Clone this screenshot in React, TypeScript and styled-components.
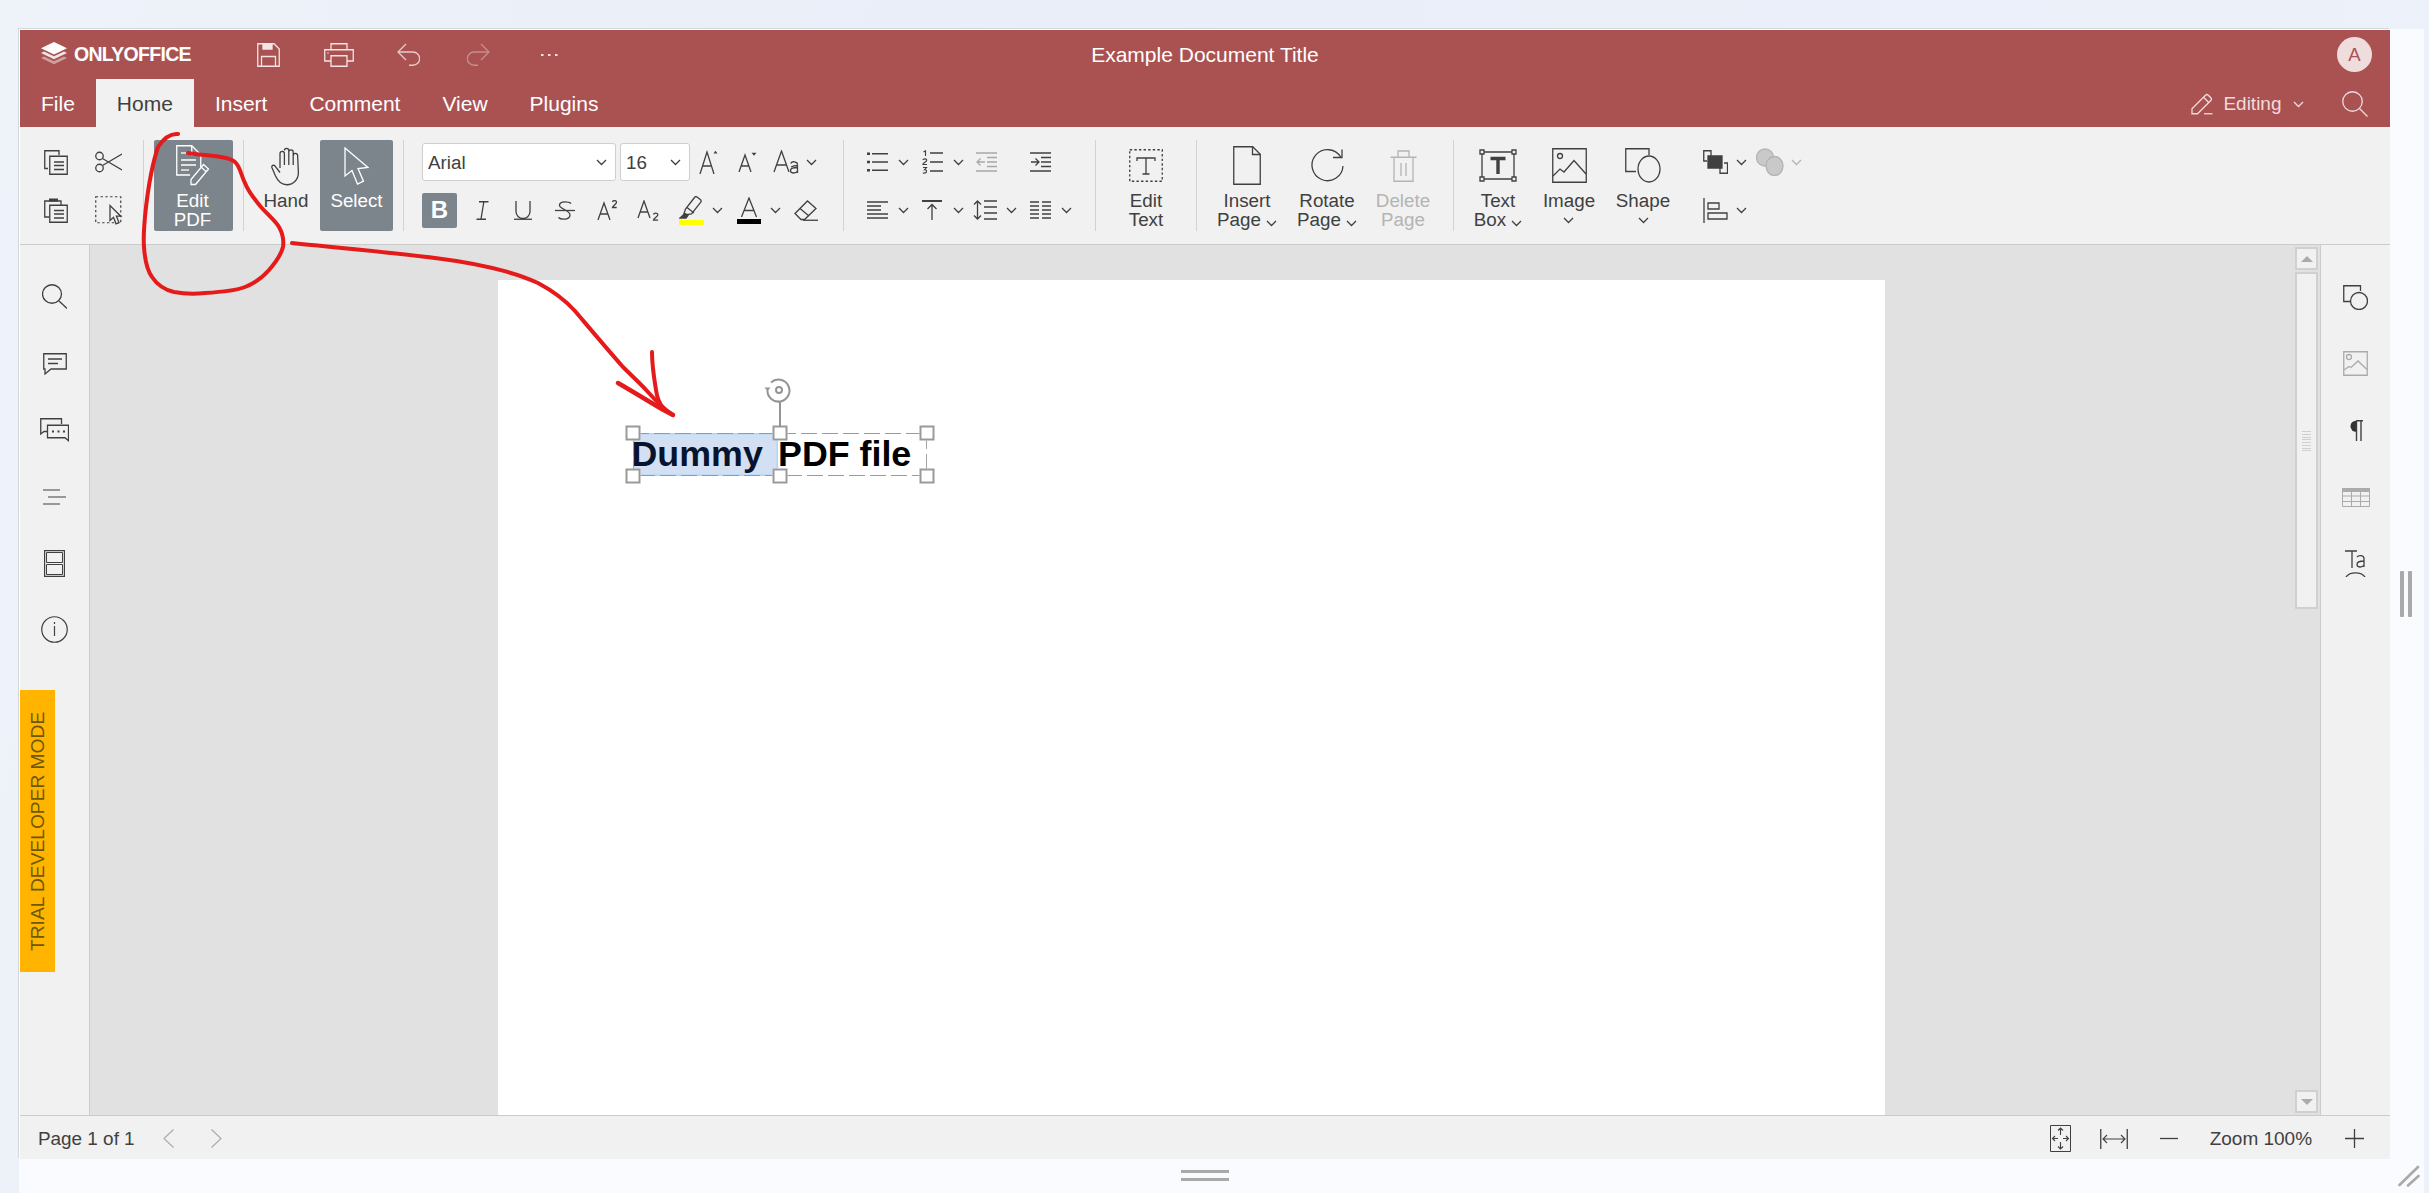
import React from "react";
import styled, { createGlobalStyle } from "styled-components";

const Global = createGlobalStyle`
  html, body { margin: 0; padding: 0; height: 100%; overflow: hidden; }
  body { font-family: "Liberation Sans", Arial, sans-serif; color: #404040; }
  #root { height: 100%; }
`;

const Shell = styled.div`
  position: relative;
  height: 100vh;
  box-sizing: border-box;
  padding: 29px 5px 0 19px;
  background: linear-gradient(100deg, #eef2f9 0%, #e9eef8 40%, #edf1fa 100%);
`;
const Host = styled.div`
  height: 100%;
  display: grid;
  grid-template-columns: 2371px 34px;
  grid-template-rows: 1130px 1fr;
  background: #fafbff;
`;
const Editor = styled.div`
  display: flex;
  flex-direction: column;
  border-top: 1px solid #fff;
  border-left: 1px solid #fff;
  box-shadow: -1px -1px 0 #d4d7dd;
  min-height: 0;
`;
const HeaderTop = styled.div`
  height: 49px;
  flex: none;
  background: #aa5252;
  display: grid;
  grid-template-columns: 1fr auto 1fr;
  align-items: center;
  color: #fff;
`;
const HeaderLeft = styled.div`
  display: flex;
  align-items: center;
  padding-left: 21px;
`;
const LogoBlock = styled.div`
  width: 192.5px;
  display: flex;
  align-items: center;
  gap: 7px;
`;
const LogoMark = styled.svg`
  display: block;
  flex: none;
`;
const LogoText = styled.span`
  font-weight: 700;
  font-size: 19.5px;
  letter-spacing: -0.7px;
  color: #fff;
`;
const Quick = styled.div<{ $opacity?: number }>`
  width: 70px;
  display: flex;
  justify-content: center;
  align-items: center;
  color: #fff;
  opacity: ${(p) => p.$opacity ?? 0.85};
`;
const Title = styled.div`
  font-size: 21px;
  color: #fff;
  padding-top: 1px;
`;
const HeaderRight = styled.div`
  display: flex;
  justify-content: flex-end;
  padding-right: 18px;
`;
const Avatar = styled.div`
  width: 35px;
  height: 35px;
  border-radius: 50%;
  background: #efdcdc;
  color: #aa5252;
  font-size: 18.6px;
  display: flex;
  align-items: center;
  justify-content: center;
`;
const TabRow = styled.div`
  height: 48px;
  flex: none;
  background: #aa5252;
  display: flex;
`;
const Tab = styled.div<{ $on?: boolean }>`
  padding: 2px 21px 0;
  display: flex;
  align-items: center;
  font-size: 21px;
  color: ${(p) => (p.$on ? "#404040" : "#fff")};
  background: ${(p) => (p.$on ? "#f1f1f1" : "transparent")};
`;
const TabRight = styled.div`
  margin-left: auto;
  display: flex;
  align-items: center;
  padding: 2px 22px 0 0;
  color: #efdcdc;
`;
const EditingText = styled.span`
  font-size: 19px;
  margin: 0 11px 0 10px;
`;
const RightSearch = styled.span`
  margin-left: 38.5px;
  display: flex;
`;

const Toolbar = styled.div`
  height: 118px;
  flex: none;
  box-sizing: border-box;
  background: #f1f1f1;
  border-bottom: 1.5px solid #cbcbcb;
  display: flex;
  align-items: flex-start;
  padding-top: 13px;
`;
const Sep = styled.div`
  width: 1px;
  height: 91px;
  flex: none;
  background: #d2d2d2;
`;
const Section = styled.div<{ $w?: number; $pl?: number }>`
  width: ${(p) => (p.$w ? `${p.$w}px` : "auto")};
  flex: none;
  box-sizing: border-box;
  padding-left: ${(p) => p.$pl ?? 0}px;
  display: flex;
`;
const Stack = styled.div<{ $w?: number; $pl?: number }>`
  width: ${(p) => (p.$w ? `${p.$w}px` : "auto")};
  flex: none;
  box-sizing: border-box;
  padding-left: ${(p) => p.$pl ?? 0}px;
  display: flex;
  flex-direction: column;
`;
const Row1 = styled.div<{ $gap?: number }>`
  height: 44px;
  display: flex;
  align-items: center;
  gap: ${(p) => p.$gap ?? 0}px;
`;
const Row2 = styled.div<{ $gap?: number }>`
  height: 52px;
  display: flex;
  align-items: center;
  gap: ${(p) => p.$gap ?? 0}px;
`;
const Tool = styled.div<{ $w?: number; $ml?: number; $off?: boolean }>`
  width: ${(p) => p.$w ?? 35}px;
  margin-left: ${(p) => p.$ml ?? 0}px;
  flex: none;
  display: flex;
  justify-content: center;
  align-items: center;
  color: ${(p) => (p.$off ? "#a8a8a8" : "#404040")};
`;
const Split = styled.div<{ $ml?: number; $off?: boolean }>`
  width: 52px;
  margin-left: ${(p) => p.$ml ?? 0}px;
  flex: none;
  display: grid;
  grid-template-columns: 34px 18px;
  align-items: center;
  justify-items: center;
  color: ${(p) => (p.$off ? "#b4b4b4" : "#404040")};
`;
const Big = styled.div<{ $w: number; $ml?: number; $mr?: number; $on?: boolean; $off?: boolean; $pl?: number; $pr?: number }>`
  width: ${(p) => p.$w}px;
  height: 91px;
  flex: none;
  box-sizing: border-box;
  padding-left: ${(p) => p.$pl ?? 0}px;
  padding-right: ${(p) => p.$pr ?? 0}px;
  margin-left: ${(p) => p.$ml ?? 0}px;
  margin-right: ${(p) => p.$mr ?? 0}px;
  border-radius: 2px;
  display: flex;
  flex-direction: column;
  align-items: center;
  background: ${(p) => (p.$on ? "#7d858c" : "transparent")};
  color: ${(p) => (p.$on ? "#fff" : p.$off ? "#b4b4b4" : "#404040")};
`;
const BigIcon = styled.div`
  height: 51px;
  flex: none;
  display: flex;
  align-items: center;
  justify-content: center;
`;
const Label = styled.div`
  font-size: 18.8px;
  line-height: 18.7px;
  padding-top: 1px;
  text-align: center;
  white-space: nowrap;
`;
const Combo = styled.div<{ $w: number; $ml?: number }>`
  width: ${(p) => p.$w}px;
  height: 38px;
  flex: none;
  box-sizing: border-box;
  margin-left: ${(p) => p.$ml ?? 0}px;
  background: #fff;
  border: 1.5px solid #cfcfcf;
  border-radius: 3px;
  padding: 1px 8px 0 5px;
  display: flex;
  align-items: center;
  justify-content: space-between;
  font-size: 18.8px;
  color: #404040;
`;
const Pressed = styled.div`
  width: 35px;
  height: 35px;
  border-radius: 2px;
  background: #7d858c;
  color: #fff;
  font-weight: 700;
  font-size: 24px;
  display: flex;
  align-items: center;
  justify-content: center;
`;

const Main = styled.div`
  flex: 1;
  min-height: 0;
  display: flex;
`;
const LeftRail = styled.div`
  width: 70px;
  flex: none;
  box-sizing: border-box;
  background: #f1f1f1;
  border-right: 1.5px solid #cbcbcb;
  padding-top: 18.7px;
  display: flex;
  flex-direction: column;
`;
const RailSlot = styled.div<{ $off?: boolean }>`
  height: 66.6px;
  flex: none;
  display: flex;
  align-items: center;
  justify-content: center;
  color: ${(p) => (p.$off ? "#ababab" : "#404040")};
`;
const Trial = styled.div`
  margin-top: 27px;
  width: 35px;
  height: 282px;
  background: #ffb400;
  color: #705800;
  font-size: 19.2px;
  writing-mode: vertical-rl;
  transform: rotate(180deg);
  display: flex;
  align-items: center;
  justify-content: center;
  white-space: nowrap;
`;
const Canvas = styled.div`
  flex: 1;
  min-width: 0;
  background: #e1e1e1;
  display: flex;
  overflow: hidden;
`;
const Viewport = styled.div`
  flex: 1;
  min-width: 0;
  padding: 35px 0 0 408px;
  display: flex;
  align-items: stretch;
`;
const Sheet = styled.div`
  position: relative;
  width: 1387px;
  background: #fff;
`;
const TextObject = styled.div`
  position: absolute;
  left: 135px;
  top: 153px;
  width: 294px;
  height: 43px;
  line-height: 43px;
  font-size: 35.8px;
  font-weight: 700;
  color: #000;
  white-space: nowrap;
`;
const Selected = styled.span`
  display: inline-block;
  width: 145px;
  height: 43px;
  vertical-align: top;
  text-indent: -1.5px;
  background: #d3e0f4;
  box-shadow: inset 0 0 0 1.5px #a9d8fb;
  color: #06142e;
`;
const Dash = styled.svg`
  position: absolute;
  left: 0;
  top: 0;
  fill: none;
  stroke: #9a9a9a;
  stroke-width: 1.8;
  stroke-dasharray: 16 5;
`;
const Handle = styled.div<{ $x: number; $y: number }>`
  position: absolute;
  left: ${(p) => p.$x}px;
  top: ${(p) => p.$y}px;
  width: 15px;
  height: 15px;
  box-sizing: border-box;
  background: #fff;
  border: 2.5px solid #9a9a9a;
  transform: translate(-50%, -50%);
`;
const Rotator = styled.svg`
  position: absolute;
  left: 130px;
  top: -56px;
  fill: none;
  stroke: #949494;
  stroke-width: 2;
`;
const Scroll = styled.div`
  width: 23px;
  flex: none;
  margin-right: 2px;
  padding: 2px 0;
  display: flex;
  flex-direction: column;
  gap: 2px;
`;
const ScrollArrow = styled.div<{ $down?: boolean }>`
  height: 23px;
  flex: none;
  box-sizing: border-box;
  background: #f1f1f1;
  border: 2px solid #d0d0d0;
  margin-top: ${(p) => (p.$down ? "auto" : "0")};
  display: flex;
  align-items: center;
  justify-content: center;
  &::before {
    content: "";
    border-left: 6px solid transparent;
    border-right: 6px solid transparent;
    ${(p) => (p.$down ? "border-top" : "border-bottom")}: 6px solid #ababab;
  }
`;
const ScrollThumb = styled.div`
  height: 337px;
  flex: none;
  box-sizing: border-box;
  background: #f1f1f1;
  border: 2px solid #d0d0d0;
  display: flex;
  align-items: center;
  justify-content: center;
  &::before {
    content: "";
    width: 9px;
    height: 20px;
    background: repeating-linear-gradient(#cfcfcf 0 1px, transparent 1px 2.75px);
  }
`;
const RightRail = styled.div`
  width: 70px;
  flex: none;
  box-sizing: border-box;
  background: #f1f1f1;
  border-left: 1.5px solid #cbcbcb;
  padding-top: 19px;
  display: flex;
  flex-direction: column;
`;
const Status = styled.div`
  height: 44px;
  flex: none;
  box-sizing: border-box;
  background: #f1f1f1;
  border-top: 1.5px solid #cbcbcb;
  display: flex;
  align-items: center;
  padding: 2px 0 0 18px;
  font-size: 18.9px;
  color: #404040;
`;
const StatusNav = styled.div<{ $ml: number; $off?: boolean }>`
  margin-left: ${(p) => p.$ml}px;
  flex: none;
  display: flex;
  color: ${(p) => (p.$off ? "#a9a9a9" : "#404040")};
`;
const ZoomText = styled.span`
  margin-left: 32px;
  font-size: 19px;
`;
const Gutter = styled.div`
  display: flex;
  align-items: center;
  justify-content: center;
  gap: 3.5px;
  padding-right: 2px;
  & > i {
    width: 4px;
    height: 46px;
    background: #a9a9a9;
    border-radius: 1px;
  }
`;
const FooterBar = styled.div`
  display: flex;
  align-items: flex-start;
  justify-content: center;
  padding-top: 11px;
`;
const DragLines = styled.div`
  width: 48px;
  height: 11px;
  border-top: 3px solid #a9a9a9;
  border-bottom: 3px solid #a9a9a9;
  box-sizing: border-box;
`;
const Corner = styled.div`
  padding: 6px 0 0 8px;
  display: flex;
  align-items: flex-start;
`;
const Glyph = styled.svg`
  display: block;
  fill: none;
  stroke: currentColor;
  stroke-width: 1.3;
  flex: none;
`;
const Overlay = styled.svg`
  position: absolute;
  left: 0;
  top: 0;
  pointer-events: none;
  fill: none;
  stroke: #e51b1b;
  stroke-linecap: round;
  stroke-linejoin: round;
`;

const I: React.FC<{ w: number; h: number; sw?: number; children: React.ReactNode }> = ({ w, h, sw, children }) => (
  <Glyph width={w} height={h} viewBox={`0 0 ${w} ${h}`} strokeWidth={sw}>{children}</Glyph>
);
const Chev = ({ color }: { color?: string }) => (
  <Glyph width="11" height="7" viewBox="0 0 11 7" strokeWidth={1.2} stroke={color}><path d="M1 1l4.5 4.5L10 1" /></Glyph>
);
const InlineChev = styled.span`
  display: inline-block;
  margin-left: 5px;
  vertical-align: -1px;
  & > svg { display: inline-block; }
`;
const LabelChev = () => <InlineChev><Chev /></InlineChev>;
const ChevLine = styled.div`
  height: 18.7px;
  display: flex;
  align-items: center;
  justify-content: center;
`;

const Lines = ({ x1, x2, ys }: { x1: number; x2: number; ys: number[] }) => (
  <path d={ys.map((y) => `M${x1} ${y}H${x2}`).join("")} />
);

const icons = {
  logo: (
    <LogoMark width="26" height="25" viewBox="0 0 26 25">
      <path d="M13 0l13 6.2L13 12.4 0 6.2z" fill="#fff" />
      <path d="M3 9.6L0 11l13 6.2L26 11l-3-1.4-10 4.7z" fill="#fff" opacity=".85" />
      <path d="M3 14.6L0 16l13 6.2L26 16l-3-1.4-10 4.7z" fill="#fff" opacity=".45" />
    </LogoMark>
  ),
  save: <I w={23} h={24}><path d="M.75.75H17L22.25 6V23.25H.75z" /><path d="M4.5 23V13.5h14V23" /><path d="M6 .75V6h9V.75" fill="currentColor" /></I>,
  print: <I w={30} h={24}><path d="M7 6.5V.75h16V6.5" /><path d="M7 18H.75V6.75h28.5V18H23" /><path d="M7 12.75h16v10.5H7z" /><path d="M3.5 10h1" /></I>,
  undo: <I w={23} h={23}><path d="M9 1L1 9l8 8" /><path d="M1 9h15a6 6 0 0 1 0 13.25h-4" /></I>,
  redo: <I w={23} h={23}><path d="M14 1l8 8-8 8" /><path d="M22 9H7a6 6 0 0 0 0 13.25h4" /></I>,
  more: <I w={18} h={4}><path d="M1 2h2.5M8 2h2.5M15 2h2.5" strokeWidth={2} /></I>,
  pencil: <I w={22} h={22}><path d="M1 20.75v-5L14.5 2.2a2 2 0 0 1 2.8 0l2.5 2.5a2 2 0 0 1 0 2.8L6.5 20.75z" /><path d="M12.5 4.2l5.3 5.3" /><path d="M13 20.75h8.5" /></I>,
  search: <I w={26} h={26}><circle cx="10.5" cy="10.5" r="9.75" /><path d="M17.5 17.5l8 8" /></I>,
  copy: <I w={24} h={25}><path d="M4 18.5H.75V.75H15V5" /><path d="M5.75 6.25h17.5v18H5.75z" /><Lines x1={10} x2={20} ys={[12, 15.5, 19.5]} /></I>,
  cut: <I w={27} h={22}><circle cx="4.5" cy="5" r="3.75" /><circle cx="4.5" cy="17" r="3.75" /><path d="M7.5 7.5L27 19M7.5 14.5L27 3" /></I>,
  paste: <I w={24} h={25}><path d="M5 19H.75V3H17v4" /><path d="M5 2h9" strokeWidth={3} /><path d="M5.75 7.25h17.5v17H5.75z" /><Lines x1={10} x2={20} ys={[12.5, 16, 20]} /></I>,
  selectAll: <I w={28} h={29}><path d="M.75.75h25v26h-25z" strokeDasharray="2.4 2.4" strokeWidth={1.2} /><path d="M15 9.5v15l3.5-3.2 2.5 6.5 3-1.2-2.6-6.4h4.4z" fill="#f1f1f1" /></I>,
  editPdf: <I w={34} h={41}><path d="M14 30H.75V.75h15l9 9V22" /><path d="M15.75 1v9h9" /><Lines x1={5} x2={15} ys={[8]} /><Lines x1={5} x2={20} ys={[15, 20]} /><Lines x1={5} x2={13} ys={[25]} /><path d="M15 39.5v-5l12.5-15 5 4.5-13 15.5z" /><path d="M25 22l5 4.5" /></I>,
  hand: <I w={30} h={40}><path d="M9 22V7.5a2.2 2.2 0 0 1 4.4 0V19m0-14.5a2.2 2.2 0 0 1 4.4 0V19m0-13a2.2 2.2 0 0 1 4.4 0v13m0-9.5a2.2 2.2 0 0 1 4.4 0l.8 17c0 7-5 12.25-11.5 12.25-6 0-9-3.5-11.5-9L.9 21.5c-.6-2 2-3 3.2-1.4L9 26.5" /></I>,
  cursor: <I w={25} h={38}><path d="M1 1v28l7-5.5L13.5 37l6-2.8-5.5-12.7 10-1z" /></I>,
  arrowUpA: <I w={19} h={24}><path d="M1 24L8 2l7 22M3.6 16h9" /><path d="M14.5 3.5l2-2.8 2 2.8z" fill="currentColor" stroke="none" /></I>,
  arrowDownA: <I w={19} h={20}><path d="M1 20L7 3l6 17M3 14h8" /><path d="M13.5.8h5l-2.5 3z" fill="currentColor" stroke="none" /></I>,
  aa: <I w={26} h={24}><path d="M1 22L8.5 1 16 22M3.6 15h10" /><path d="M24.5 14.5c0-3-5.5-3.8-6.8-1M18 17c3-1.6 6.5-1.5 6.5-1.5V23m0-2c-1.2 2.5-7 3-7-.5 0-2 3-3 7-3" /></I>,
  italic: <I w={13} h={19}><path d="M3 .75h9.5M.5 18.25H10M7.8 1L5 18" /></I>,
  underline: <I w={18} h={20}><path d="M2 1v10.5a7 7 0 0 0 14 0V1" /><path d="M0 19.25h18" /></I>,
  strike: <I w={20} h={19}><path d="M16 2.5C14.5.9 5-.5 4.5 4c-.5 4 10.5 5 10.5 10 0 5-9 5-11.5 2.5" /><path d="M0 9.5h20" /></I>,
  sup: <I w={20} h={20}><path d="M1 20L7 3l6 17M3.2 14h7.6" /><path d="M15.5 2c.5-2 4-1.8 4 .3 0 1.7-3.5 3-4 5.2h4.2" strokeWidth={1.3} /></I>,
  sub: <I w={22} h={21}><path d="M1 18L7 1l6 17M3.2 12h7.6" /><path d="M16.5 14.5c.5-2 4.4-1.8 4.4.3 0 1.9-4 3-4.4 5.4h4.6" strokeWidth={1.3} /></I>,
  highlight: <I w={25} h={29}><path d="M4.5 19l2-6L15.5 1.5a2 2 0 0 1 2.8-.3l3 2.4a2 2 0 0 1 .3 2.8L12.5 18z" /><path d="M8 11.5l7 5.5" /><path d="M6 17.5L1 22h6l2-2.5z" fill="currentColor" /><path d="M0 26.5h25" stroke="#ffff00" strokeWidth={5} /></I>,
  fontColor: <I w={24} h={27}><path d="M4.5 20L12 1l7.5 19M7 13.5h10" /><path d="M0 24.5h24" stroke="#000" strokeWidth={5} /></I>,
  eraser: <I w={24} h={21}><path d="M1 13.5L13.5 1l8.5 7.5L10.5 19.5H7z" /><path d="M6 8.5l9 7.5" /><path d="M9 20.25h15" /></I>,
  bullets: <I w={21} h={20}><path d="M0 1.75h3M0 10h3M0 18.25h3" strokeWidth={2.5} /><Lines x1={5} x2={21} ys={[1.75, 10, 18.25]} /></I>,
  numbered: <I w={21} h={24}><Lines x1={8} x2={21} ys={[3, 12, 21]} /><path d="M1.5 2L3.5.8V6" strokeWidth={1.1} /><path d="M.8 10c.5-1.6 4-1.5 4 .3 0 1.5-3.6 2.4-4 4.2h4.2" strokeWidth={1.1} /><path d="M1 17.5h3.5l-2 2.2c2.8-.5 3.2 3.8-1.6 3.4" strokeWidth={1.1} /></I>,
  outdent: <I w={21} h={20}><Lines x1={0} x2={21} ys={[1, 19]} /><Lines x1={11} x2={21} ys={[5.5, 10, 14.5]} /><path d="M9 10H1M4.5 6.5L1 10l3.5 3.5" /></I>,
  indent: <I w={21} h={20}><Lines x1={0} x2={21} ys={[1, 19]} /><Lines x1={11} x2={21} ys={[5.5, 10, 14.5]} /><path d="M1 10h8M5.5 6.5L9 10l-3.5 3.5" /></I>,
  alignLeft: <I w={21} h={18}><Lines x1={0} x2={21} ys={[1, 13, 17]} /><Lines x1={0} x2={14} ys={[5, 9]} /></I>,
  valign: <I w={20} h={20}><path d="M0 1h20" strokeWidth={2} /><path d="M10 20V4.5M5.5 9L10 4.5 14.5 9" /></I>,
  lineSpace: <I w={24} h={22}><path d="M4.5 2v18M1 5.5L4.5 2 8 5.5M1 16.5L4.5 20 8 16.5" /><Lines x1={11} x2={24} ys={[2, 8, 14, 20]} /></I>,
  columns: <I w={21} h={18}><Lines x1={0} x2={9} ys={[1, 5, 9, 13, 17]} /><Lines x1={12} x2={21} ys={[1, 5, 9, 13, 17]} /></I>,
  editText: <I w={34} h={33}><path d="M.75.75h32.5v31.5H.75z" strokeDasharray="2.4 2.2" strokeWidth={1.3} /><path d="M8 12V9h18v3M17 9v16M13.5 25h7" /></I>,
  page: <I w={28} h={39}><path d="M.75.75h19l7.5 7.5v30H.75z" /><path d="M19.5 1v7.5h8" /></I>,
  rotate: <I w={33} h={34}><path d="M30 8.5A15.5 15.5 0 1 0 32 17" /><path d="M22 8.5h9V.5" /></I>,
  trash: <I w={27} h={32}><path d="M4 8v23.25h19V8" /><path d="M.5 7.25h26M8 7V1h11v6" /><path d="M11 13v13M16 13v13" /></I>,
  textBox: <I w={38} h={33}><path d="M3 3h32v27H3z" /><path d="M1 1h4v4H1zM33 1h4v4h-4zM1 28h4v4H1zM33 28h4v4h-4z" fill="#f1f1f1" /><path d="M11.5 9.5h15M19 9v16" strokeWidth={3.4} /></I>,
  image: <I w={35} h={35}><path d="M.75.75h33.5v33.5H.75z" /><circle cx="8" cy="8" r="2.5" /><path d="M1 28l7-7 4 3 10-11.5L34 26" /></I>,
  shape: <I w={36} h={35}><path d="M11 23.5H.75V.75H24V7" /><ellipse cx="24" cy="21" rx="11" ry="13" /></I>,
  arrange: <I w={25} h={24}><path d="M8 6V.75H.75V11H4" /><path d="M17 18v5.25h7.5V13H21" /><path d="M5 6h14v12H5z" fill="currentColor" /></I>,
  group: <I w={28} h={28}><circle cx="9" cy="9.5" r="8.5" fill="#c9c9c9" /><ellipse cx="18.5" cy="18" rx="8.5" ry="9.5" fill="#c9c9c9" /></I>,
  alignObj: <I w={25} h={25}><path d="M1 0v25" /><path d="M5 5h11v6H5zM5 15h19v6H5z" /></I>,
  rShape: <I w={25} h={25}><path d="M7 16.5H.75V.75H17.5V6" /><circle cx="16" cy="16" r="8.5" /></I>,
  rImage: <I w={25} h={25}><path d="M.75.75h23.5v23.5H.75z" /><circle cx="6" cy="6" r="2.5" /><path d="M1 19l5-3.5 2 1 7-6.5 9 8.5" /></I>,
  para: <I w={15} h={21}><path d="M8 .75A5.5 5.5 0 0 0 8 11.75z" fill="#333" stroke="none" /><path d="M8 .75h7M8.5 1v20M13 1v20" strokeWidth={1.4} /></I>,
  table: <I w={28} h={19}><path d="M.5.5h27v18H.5z" strokeWidth={1} /><path d="M0 2h28" strokeWidth={4} /><path d="M0 8h28M0 13.5h28M9.5 4v15M18.5 4v15" strokeWidth={1} /></I>,
  textArt: <I w={21} h={27}><path d="M0 1h12M7 1v17" /><path d="M12 7c2-2.5 7-1.5 7 1.5V17m0-6c-4 0-7 1-7 3.5 0 3 5 3.5 7 .5" /><path d="M1 27c4-5.5 15-5.5 19 0" /></I>,
  lSearch: <I w={25} h={25}><ellipse cx="10" cy="10" rx="9.5" ry="9.25" /><path d="M17 17l8 7.5" /></I>,
  comment: <I w={24} h={22}><path d="M.75.75h22.5V16H8L2 21v-5H.75z" /><path d="M5 6h14M5 10.5h10" /></I>,
  chats: <I w={29} h={24}><path d="M7 13.5H4L.75 16V.75H21.5V6" /><path d="M7.5 7.25h21v15.5l-3.5-3H7.5z" fill="#f1f1f1" /><path d="M12 13.5h2M17.5 13.5h2M23 13.5h2" strokeWidth={2} /></I>,
  nav: <I w={24} h={16}><path d="M0 1h17M5 8h18M0 15h17" strokeWidth={1.2} /></I>,
  thumbs: <I w={21} h={27}><path d="M.6.6h19.8v25.8H.6z" strokeWidth={1.2} /><path d="M2.5 2.5h16v10h-16zM2.5 14.5h16v10h-16z" strokeWidth={1} /></I>,
  info: <I w={27} h={27}><circle cx="13.5" cy="13.5" r="12.75" strokeWidth={1.2} /><path d="M13.5 10v10M13.5 6v2" strokeWidth={1.2} /></I>,
  left: <I w={11} h={19}><path d="M10.5.5L1 9.5l9.5 9" strokeWidth={1.1} /></I>,
  right: <I w={11} h={19}><path d="M.5.5L10 9.5l-9.5 9" strokeWidth={1.1} /></I>,
  fitPage: <I w={21} h={27}><path d="M.5.5h20v26H.5z" strokeWidth={1} /><path d="M10.5 3v7M8 5.5L10.5 3 13 5.5M10.5 17v7M8 21.5l2.5 2.5 2.5-2.5M2.500 13.5H8M5 11l-2.5 2.5L5 16M13 13.5h5.500M16 11l2.5 2.5L16 16" strokeWidth={1.1} /></I>,
  fitWidth: <I w={28} h={20}><path d="M.75 0v20M27.25 0v20" /><path d="M3 10h22M7 6l-4 4 4 4M21 6l4 4-4 4" strokeWidth={1.1} /></I>,
  minus: <I w={18} h={3}><path d="M0 1.5h18" /></I>,
  plus: <I w={19} h={19}><path d="M0 9.5h19M9.5 0v19" /></I>,
  grip: <svg width="22" height="22" viewBox="0 0 22 22" fill="none" stroke="#a9a9a9" strokeWidth="2.6" strokeLinecap="round"><path d="M1.5 20L20 2" /><path d="M10 20.5L20.5 11" /></svg>,
};

const Sp = ({ icon, ml, off }: { icon: React.ReactNode; ml?: number; off?: boolean }) => (
  <Split $ml={ml} $off={off}>{icon}<Chev /></Split>
);

export default function App() {
  return (
    <Shell>
      <Global />
      <Host>
        <Editor>
          <HeaderTop>
            <HeaderLeft>
              <LogoBlock>{icons.logo}<LogoText>ONLYOFFICE</LogoText></LogoBlock>
              <Quick>{icons.save}</Quick>
              <Quick>{icons.print}</Quick>
              <Quick $opacity={0.7}>{icons.undo}</Quick>
              <Quick $opacity={0.35}>{icons.redo}</Quick>
              <Quick>{icons.more}</Quick>
            </HeaderLeft>
            <Title>Example Document Title</Title>
            <HeaderRight><Avatar>A</Avatar></HeaderRight>
          </HeaderTop>
          <TabRow>
            <Tab>File</Tab>
            <Tab $on>Home</Tab>
            <Tab>Insert</Tab>
            <Tab>Comment</Tab>
            <Tab>View</Tab>
            <Tab>Plugins</Tab>
            <TabRight>
              {icons.pencil}
              <EditingText>Editing</EditingText>
              <Chev color="#efdcdc" />
              <RightSearch>{icons.search}</RightSearch>
            </TabRight>
          </TabRow>
          <Toolbar>
            <Stack $w={123} $pl={18}>
              <Row1 $gap={18}><Tool>{icons.copy}</Tool><Tool>{icons.cut}</Tool></Row1>
              <Row2 $gap={18}><Tool>{icons.paste}</Tool><Tool>{icons.selectAll}</Tool></Row2>
            </Stack>
            <Sep />
            <Big $w={79} $ml={10} $mr={10} $on $pr={2}>
              <BigIcon>{icons.editPdf}</BigIcon>
              <Label>Edit<br />PDF</Label>
            </Big>
            <Sep />
            <Big $w={76} $pl={8}>
              <BigIcon>{icons.hand}</BigIcon>
              <Label>Hand</Label>
            </Big>
            <Big $w={73} $mr={10} $on>
              <BigIcon>{icons.cursor}</BigIcon>
              <Label>Select</Label>
            </Big>
            <Sep />
            <Stack $w={439} $pl={18}>
              <Row1>
                <Combo $w={194}>Arial<Chev /></Combo>
                <Combo $w={70} $ml={4}>16<Chev /></Combo>
                <Tool $w={40} $ml={-2}>{icons.arrowUpA}</Tool>
                <Tool $w={38}>{icons.arrowDownA}</Tool>
                <Tool $w={39}>{icons.aa}</Tool>
                <Tool $w={12}><Chev /></Tool>
              </Row1>
              <Row2>
                <Pressed>B</Pressed>
                <Tool $w={50}>{icons.italic}</Tool>
                <Tool $w={32}>{icons.underline}</Tool>
                <Tool $w={52}>{icons.strike}</Tool>
                <Tool $w={32}>{icons.sup}</Tool>
                <Tool $w={50}>{icons.sub}</Tool>
                <Sp icon={icons.highlight} ml={1} />
                <Sp icon={icons.fontColor} ml={6} />
                <Tool $w={44}>{icons.eraser}</Tool>
              </Row2>
            </Stack>
            <Sep />
            <Stack $w={251} $pl={16}>
              <Row1>
                <Sp icon={icons.bullets} />
                <Sp icon={icons.numbered} ml={3} />
                <Tool $w={38} $off>{icons.outdent}</Tool>
                <Tool $w={38} $ml={16}>{icons.indent}</Tool>
              </Row1>
              <Row2>
                <Sp icon={icons.alignLeft} />
                <Sp icon={icons.valign} ml={3} />
                <Sp icon={icons.lineSpace} ml={1} />
                <Sp icon={icons.columns} ml={3} />
              </Row2>
            </Stack>
            <Sep />
            <Section $w={100}>
              <Big $w={100}>
                <BigIcon>{icons.editText}</BigIcon>
                <Label>Edit<br />Text</Label>
              </Big>
            </Section>
            <Sep />
            <Section $w={256} $pl={14}>
              <Big $w={72}>
                <BigIcon>{icons.page}</BigIcon>
                <Label>Insert<br />Page<LabelChev /></Label>
              </Big>
              <Big $w={72} $ml={8}>
                <BigIcon>{icons.rotate}</BigIcon>
                <Label>Rotate<br />Page<LabelChev /></Label>
              </Big>
              <Big $w={72} $ml={4} $off>
                <BigIcon>{icons.trash}</BigIcon>
                <Label>Delete<br />Page</Label>
              </Big>
            </Section>
            <Sep />
            <Section $w={244} $pl={9}>
              <Big $w={70}>
                <BigIcon>{icons.textBox}</BigIcon>
                <Label>Text<br />Box<LabelChev /></Label>
              </Big>
              <Big $w={70} $ml={1}>
                <BigIcon>{icons.image}</BigIcon>
                <Label>Image<ChevLine><Chev /></ChevLine></Label>
              </Big>
              <Big $w={70} $ml={4}>
                <BigIcon>{icons.shape}</BigIcon>
                <Label>Shape<ChevLine><Chev /></ChevLine></Label>
              </Big>
            </Section>
            <Stack>
              <Row1 $gap={3}>
                <Sp icon={icons.arrange} />
                <Sp icon={icons.group} off />
              </Row1>
              <Row2>
                <Sp icon={icons.alignObj} />
              </Row2>
            </Stack>
          </Toolbar>
          <Main>
            <LeftRail>
              <RailSlot>{icons.lSearch}</RailSlot>
              <RailSlot>{icons.comment}</RailSlot>
              <RailSlot>{icons.chats}</RailSlot>
              <RailSlot>{icons.nav}</RailSlot>
              <RailSlot>{icons.thumbs}</RailSlot>
              <RailSlot>{icons.info}</RailSlot>
              <Trial>TRIAL DEVELOPER MODE</Trial>
            </LeftRail>
            <Canvas>
              <Viewport>
                <Sheet>
                  <TextObject>
                    <Selected>Dummy </Selected>PDF file
                    <Dash width="294" height="43" viewBox="0 0 294 43"><rect x="0" y="0" width="294" height="43" /></Dash>
                    <Handle $x={0} $y={0} />
                    <Handle $x={147} $y={0} />
                    <Handle $x={294} $y={0} />
                    <Handle $x={0} $y={43} />
                    <Handle $x={147} $y={43} />
                    <Handle $x={294} $y={43} />
                    <Rotator width="34" height="50" viewBox="0 0 34 50">
                      <circle cx="16" cy="13" r="3" />
                      <path d="M8 5.5a11 11 0 1 1-3.5 7" />
                      <path d="M1.5 10.5h6l-3 3.5z" fill="#949494" stroke="none" />
                      <path d="M17 25v25" />
                    </Rotator>
                  </TextObject>
                </Sheet>
              </Viewport>
              <Scroll>
                <ScrollArrow />
                <ScrollThumb />
                <ScrollArrow $down />
              </Scroll>
            </Canvas>
            <RightRail>
              <RailSlot>{icons.rShape}</RailSlot>
              <RailSlot $off>{icons.rImage}</RailSlot>
              <RailSlot>{icons.para}</RailSlot>
              <RailSlot $off>{icons.table}</RailSlot>
              <RailSlot>{icons.textArt}</RailSlot>
            </RightRail>
          </Main>
          <Status>
            Page 1 of 1
            <StatusNav $ml={28} $off>{icons.left}</StatusNav>
            <StatusNav $ml={37} $off>{icons.right}</StatusNav>
            <StatusNav $ml={1828}>{icons.fitPage}</StatusNav>
            <StatusNav $ml={29}>{icons.fitWidth}</StatusNav>
            <StatusNav $ml={32}>{icons.minus}</StatusNav>
            <ZoomText>Zoom 100%</ZoomText>
            <StatusNav $ml={33}>{icons.plus}</StatusNav>
          </Status>
        </Editor>
        <Gutter><i /><i /></Gutter>
        <FooterBar><DragLines /></FooterBar>
        <Corner>{icons.grip}</Corner>
      </Host>
      <Overlay width="2429" height="1193" viewBox="0 0 2429 1193">
        <path strokeWidth="4" d="M178 134C170 133 164 138 158 147C152 165 148 190 146 207C144 225 143 235 144 247C145 262 147 270 152 277C158 286 165 290 174 292C185 294 195 294 205 293C222 292 235 291 245 287C255 283 263 277 269 270C276 262 281 255 283 247C284 240 283 234 279 227C275 220 267 214 261 207C255 200 249 193 245 183C241 175 240 166 235 162C230 158 226 158 221 157C210 155 198 155 188 153" />
        <path strokeWidth="4" d="M292 243C340 248 390 252 435 258C475 263 510 270 538 283C553 291 565 300 575 311C592 331 608 350 623 367C632 376 640 383 648 392C655 400 664 409 673 415" />
        <path strokeWidth="4" d="M652 352C652 365 654 378 656 390C657 397 659 403 663 408" />
        <path strokeWidth="4.5" d="M618 383C630 390 640 396 650 402C658 407 665 411 673 415" />
      </Overlay>
    </Shell>
  );
}
